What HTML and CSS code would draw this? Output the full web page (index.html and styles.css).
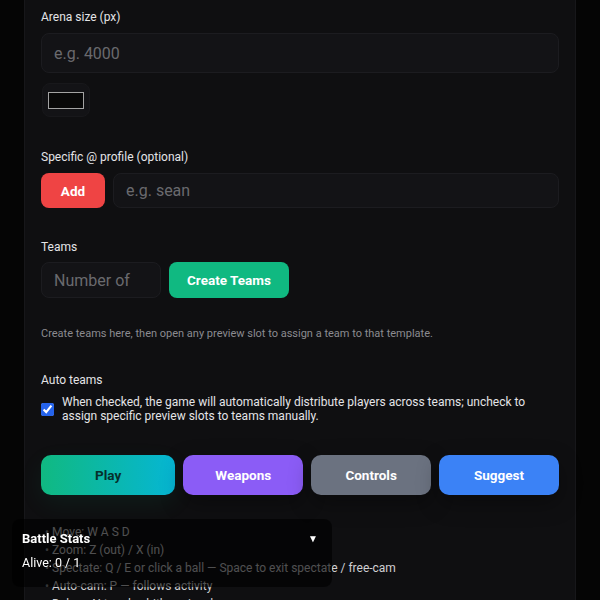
FILE: index.html
```html
<!DOCTYPE html>
<html lang="en">
<head>
<meta charset="utf-8">
<title>Arena setup</title>
<link rel="stylesheet" href="styles.css">
</head>
<body>
<main class="card">
  <section class="field first">
    <label class="label">Arena size (px)</label>
    <input class="input" type="text" placeholder="e.g. 4000">
    <div class="color-box"><span class="swatch"></span></div>
  </section>

  <section class="field">
    <label class="label">Specific @ profile (optional)</label>
    <div class="row">
      <button class="btn btn-red btn-add">Add</button>
      <input class="input input-sm grow" type="text" placeholder="e.g. sean">
    </div>
  </section>

  <section class="field teams">
    <label class="label">Teams</label>
    <div class="row">
      <input class="input input-sm num" type="text" placeholder="Number of">
      <button class="btn btn-green btn-create">Create Teams</button>
    </div>
  </section>

  <p class="hint">Create teams here, then open any preview slot to assign a team to that template.</p>

  <section class="field auto">
    <label class="label">Auto teams</label>
    <label class="check-row">
      <input type="checkbox" class="check" checked>
      <span>When checked, the game will automatically distribute players across teams; uncheck to assign specific preview slots to teams manually.</span>
    </label>
  </section>

  <div class="actions">
    <button class="btn big btn-play">Play</button>
    <button class="btn big btn-purple">Weapons</button>
    <button class="btn big btn-gray">Controls</button>
    <button class="btn big btn-blue">Suggest</button>
  </div>

  <ul class="controls">
    <li>Move: W A S D</li>
    <li>Zoom: Z (out) / X (in)</li>
    <li>Spectate: Q / E or click a ball — Space to exit spectate / free-cam</li>
    <li>Auto-cam: P — follows activity</li>
    <li>Debug: N toggles hitbox visuals</li>
  </ul>
</main>

<aside class="stats">
  <div class="stats-head"><span class="stats-title">Battle Stats</span><span class="caret">▼</span></div>
  <div class="stats-line">Alive: 0 / 1</div>
</aside>
</body>
</html>
```

FILE: styles.css
```css
* { box-sizing: border-box; }

html, body {
  margin: 0;
  background: #050505;
  font-family: Roboto, "Noto Sans", Arial, sans-serif;
  color: #e4e4e7;
}

.card {
  margin: 0 24px;
  padding: 9px 16px 40px;
  background: #0f0f11;
  border: 1px solid #17171a;
  border-top: 0;
  min-height: 700px;
}

.field { margin-top: 32px; }
.field.first { margin-top: 0; }

.label {
  display: block;
  font-size: 12px;
  line-height: 16px;
  color: #e4e4e7;
  margin-bottom: 8px;
}

.input {
  display: block;
  width: 100%;
  height: 40px;
  padding: 0 12px;
  background: #131316;
  border: 1px solid #1c1c20;
  border-radius: 8px;
  color: #e4e4e7;
  font-family: Roboto, sans-serif;
  font-size: 16px;
  outline: none;
}
.input::placeholder { color: #6a6a6e; }
.input-sm { height: 35px; }

.color-box {
  margin-top: 10px;
  margin-left: 1px;
  width: 48px;
  height: 34px;
  background: #131316;
  border: 1px solid #18181b;
  border-radius: 8px;
  display: flex;
  align-items: center;
  justify-content: center;
}
.swatch {
  width: 36px;
  height: 17px;
  background: #080808;
  border: 1px solid #a3a3a3;
}

.row {
  display: flex;
  gap: 8px;
  align-items: center;
}
.grow { flex: 1; width: auto; }
.num { width: 120px; height: 36px; }

.btn {
  border: 0;
  border-radius: 8px;
  font-family: Roboto, sans-serif;
  font-weight: 700;
  font-size: 13.5px;
  color: #fff;
  cursor: pointer;
}
.btn-red { background: #ef4444; }
.btn-add { width: 64px; height: 35px; }
.btn-green { background: #10b981; }
.btn-create { width: 120px; height: 36px; }

.teams { margin-top: 31px; }
.teams .label { margin-bottom: 7px; }

.hint {
  margin: 29px 0 0;
  font-size: 11px;
  line-height: 14px;
  color: #8b8b90;
}

.field.auto { margin-top: 31px; }
.auto .label { margin-bottom: 7px; }

.check-row {
  display: flex;
  align-items: center;
  gap: 8px;
  font-size: 12px;
  line-height: 14px;
  color: #e4e4e7;
}
.check {
  margin: 0;
  width: 13px;
  height: 13px;
  flex: none;
  accent-color: #2563eb;
}

.actions {
  margin-top: 32px;
  display: grid;
  grid-template-columns: 1.12fr 1fr 1fr 1fr;
  gap: 8px;
}
.big {
  height: 40px;
  border-radius: 10px;
  box-shadow: 0 8px 22px rgba(0, 0, 0, 0.35);
}
.btn-play {
  background: linear-gradient(90deg, #10b981, #06b6d4);
  color: #06302b;
  box-shadow: 0 8px 24px rgba(16, 185, 129, 0.08);
}
.btn-purple { background: #8b5cf6; }
.btn-gray { background: #6b7280; }
.btn-blue { background: #3b82f6; }

.controls {
  list-style: none;
  margin: 28px 0 0;
  padding: 0 0 0 4px;
  font-size: 12px;
  line-height: 18px;
  color: #cfcfd3;
}
.controls li::before {
  content: "• ";
  color: #8b8b90;
}

.stats {
  position: fixed;
  left: 12px;
  top: 519px;
  width: 320px;
  height: 68px;
  padding: 10px 14px 10px 10px;
  background: rgba(0, 0, 0, 0.62);
  border-radius: 8px;
  color: #fff;
}
.stats-head {
  display: flex;
  justify-content: space-between;
  align-items: center;
  height: 18px;
}
.stats-title {
  font-weight: 700;
  font-size: 13px;
}
.caret {
  font-size: 10px;
  color: #fff;
}
.stats-line {
  margin-top: 8px;
  font-size: 12.5px;
  line-height: 16px;
}
```
